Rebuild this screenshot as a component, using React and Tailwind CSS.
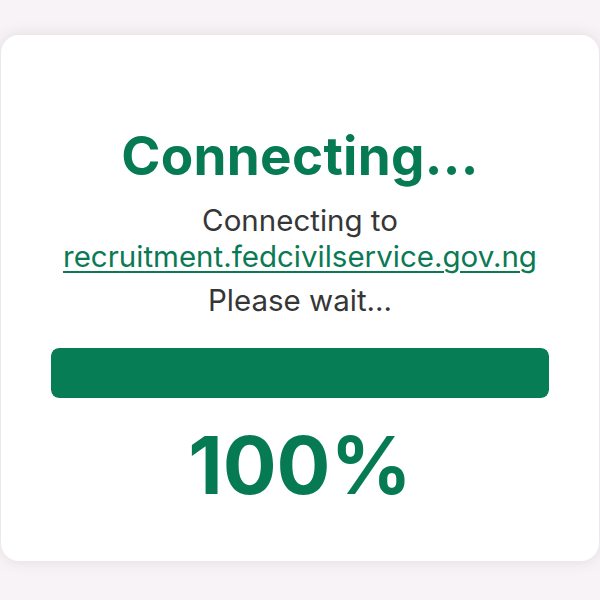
export default function App() {
  return (
    <div className="min-h-screen w-[600px] bg-[#f7f3f6] pt-[35px] font-['Inter',sans-serif]">
      <div className="mx-auto w-[598px] h-[526px] rounded-[18px] bg-white shadow-[0_0_16px_rgba(0,0,0,0.1)] flex flex-col items-center pt-[91px] px-[50px]">
        <h1 className="text-[53px] leading-[60px] font-bold text-[#067b53] tracking-[0.3px]">
          Connecting...
        </h1>
        <p className="mt-[16px] text-[29.5px] leading-[36px] text-[#363636] text-center">
          Connecting to
          <br />
          <a href="#" className="text-[#0a7a55] underline underline-offset-[4px] decoration-[1.5px]">
            recruitment.fedcivilservice.gov.ng
          </a>
        </p>
        <p className="mt-[8px] text-[29.5px] leading-[36px] text-[#363636]">Please wait...</p>
        <div className="mt-[30px] w-full h-[50px] rounded-[8px] bg-[#e5e7eb] overflow-hidden">
          <div className="h-full w-full bg-[#067d55] rounded-[8px]"></div>
        </div>
        <div className="mt-[23px] text-[80px] leading-[88px] font-bold text-[#067b53]">100%</div>
      </div>
    </div>
  );
}
